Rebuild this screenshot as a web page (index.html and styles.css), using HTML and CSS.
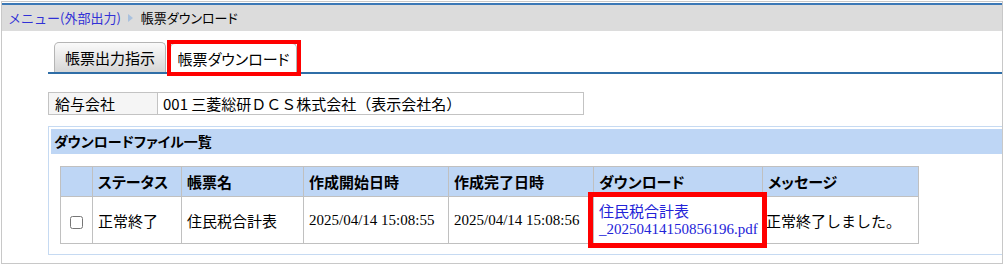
FILE: index.html
```html
<!DOCTYPE html>
<html>
<head>
  <meta charset="utf-8">
  <title>帳票ダウンロード</title>
  <link rel="stylesheet" href="styles.css">
</head>
<body>
  <div class="frame">
    <div class="crumb">
      <a href="#">メニュー(外部出力)</a>
      <span class="arrow"></span>
      <span class="here">帳票ダウンロード</span>
    </div>
    <div class="main">
      <div class="tabs">
        <div class="tab">帳票出力指示</div>
        <div class="tab active">帳票ダウンロード</div>
      </div>

      <table class="company">
        <tr>
          <td class="label">給与会社</td>
          <td>001 三菱総研ＤＣＳ株式会社（表示会社名）</td>
        </tr>
      </table>

      <div class="panel">
        <div class="panel-title">ダウンロードファイル一覧</div>
        <table class="files">
          <tr>
            <th class="c-check"></th>
            <th class="c-status">ステータス</th>
            <th class="c-name">帳票名</th>
            <th class="c-date">作成開始日時</th>
            <th class="c-date">作成完了日時</th>
            <th class="c-dl">ダウンロード</th>
            <th class="c-msg">メッセージ</th>
          </tr>
          <tr>
            <td class="center"><input type="checkbox"></td>
            <td>正常終了</td>
            <td>住民税合計表</td>
            <td class="serif">2025/04/14 15:08:55</td>
            <td class="serif">2025/04/14 15:08:56</td>
            <td class="mark"><a href="#">住民税合計表<br><span class="file">_20250414150856196.pdf</span></a></td>
            <td class="msg">正常終了しました。</td>
          </tr>
        </table>
      </div>
    </div>
  </div>
</body>
</html>
```

FILE: styles.css
```css
body { margin: 0; font-family: "Noto Sans CJK JP", sans-serif; font-size: 15px; color: #000; background: #fff; }
a { color: #2323d8; text-decoration: none; }

.frame {
  margin: 1px 0 0 1px;
  width: 1002px;
  height: 263px;
  box-sizing: border-box;
  border: 1px solid #c8c8c8;
  overflow: hidden;
}

.crumb {
  margin-top: 1px;
  border-top: 2px solid #3b78b6;
  background: #dcdcdc;
  height: 26px;
  display: flex;
  align-items: center;
  padding-left: 6px;
  font-size: 13px;
  line-height: 16px;
}
.crumb a { color: #3131d6; }
.crumb .arrow {
  width: 0; height: 0;
  border-left: 5px solid #a9c1de;
  border-top: 4px solid transparent;
  border-bottom: 4px solid transparent;
  margin: 0 8px 0 7px;
}
.crumb .here { font-feature-settings: "palt"; }

.main { padding-left: 46px; }

.tabs {
  display: flex;
  align-items: flex-end;
  gap: 4px;
  margin-top: 11px;
  padding-left: 6px;
  border-bottom: 2px solid #2f6ea7;
}
.tab {
  position: relative;
  height: 29px;
  line-height: 29px;
  padding: 0 10px;
  border: 1px solid #b5b5b5;
  border-bottom: none;
  border-radius: 5px 5px 0 0;
  background: linear-gradient(#fafafa, #d6d6d6);
  white-space: nowrap;
}
.tab.active {
  width: 127px;
  padding: 0;
  box-sizing: border-box;
  text-align: center;
  background: #fff;
  font-feature-settings: "palt";
}
.tab.active::after {
  content: "";
  position: absolute;
  left: -4px; right: -5px; top: -4px; bottom: -4px;
  border: 4px solid #f00;
}

.company {
  margin-top: 18px;
  border-collapse: collapse;
  width: 536px;
}
.company td {
  border: 1px solid #c3c3c3;
  height: 21px;
  padding: 0 5px;
  line-height: 21px;
  white-space: nowrap;
}
.company .label { width: 97px; background: #f5f5f5; padding-left: 6px; }

.panel {
  margin-top: 11px;
  border: 1px solid #c6daf2;
  border-right: none;
  padding: 2px 0 10px 2px;
}
.panel-title {
  background: #bed6f5;
  height: 25px;
  line-height: 25px;
  padding-left: 3px;
  font-size: 14px;
  font-weight: bold;
  font-feature-settings: "palt";
}

.files {
  margin: 12px 0 0 9px;
  border-collapse: collapse;
  table-layout: fixed;
  width: 858px;
}
.files th, .files td {
  border: 1px solid #c0c0c0;
  padding: 0 5px;
  text-align: left;
  white-space: nowrap;
  overflow: visible;
}
.files th {
  background: #bed6f5;
  height: 29px;
  font-weight: bold;
  font-feature-settings: "palt";
}
.files td { height: 46px; }
.files .c-check { width: 21px; }
.files .c-status { width: 78px; }
.files .c-name { width: 111px; }
.files .c-date { width: 134px; }
.files .c-dl { width: 158px; }
.files .c-msg { width: 145px; }
.files .center { text-align: center; padding: 0; }
.files input { margin: 0; width: 13px; height: 13px; vertical-align: middle; }
.files .serif { font-family: "Liberation Serif", "Noto Sans CJK JP", serif; }
.files .msg { padding-left: 3px; }
.files .mark { position: relative; line-height: 17px; }
.files .mark .file { font-family: "Liberation Serif", serif; }
.files .mark::after {
  content: "";
  position: absolute;
  left: -6px; right: -5px; top: -5px; bottom: -5px;
  border: 5px solid #f00;
}
```
